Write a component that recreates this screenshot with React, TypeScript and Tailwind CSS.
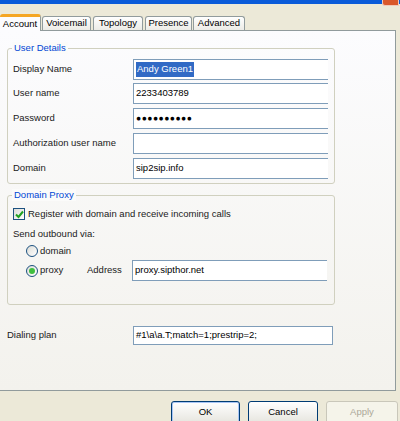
import { FC, ReactNode } from 'react';

const font = "font-['Liberation_Sans',Arial,sans-serif]";

const Field: FC<{ children?: ReactNode; w?: string }> = ({ children, w = 'w-[195px]' }) => (
  <div className={`${w} flex h-[21px] items-center border-y border-l border-[#7f9db9] bg-white pl-[2px] text-[9.5px] text-black`}>
    {children}
  </div>
);

const Row: FC<{ label: string; children?: ReactNode; cls?: string }> = ({ label, children, cls = '' }) => (
  <div className={`flex h-[21px] items-center ${cls}`}>
    <div className="w-[120px] text-[9.5px] text-[#1a1a1a]">{label}</div>
    <Field>{children}</Field>
  </div>
);

const GroupBox: FC<{ title: string; children: ReactNode; cls?: string }> = ({ title, children, cls = '' }) => (
  <div className={`relative ml-[7px] w-[328px] rounded-[3px] border border-[#d0d0bf] ${cls}`}>
    <div className="absolute -top-[7px] left-[4px] bg-[#fbfbfa] px-[2px] text-[9.5px] leading-[12px] text-[#0046d5]">{title}</div>
    {children}
  </div>
);

const tabs = ['Voicemail', 'Topology', 'Presence', 'Advanced'];

const App: FC = () => {
  return (
    <div className={`${font} flex h-[421px] w-[400px] flex-col overflow-hidden bg-[#ece9d8]`}>
      {/* title bar strip */}
      <div className="flex h-[4px] shrink-0 bg-[#0a5bd9]">
        <div className="flex-1" />
        <div className="relative z-10 h-[6px] w-[17px] rounded-bl-[3px] border border-t-0 border-[#f2c9b9] bg-[#d9582b]" />
        <div className="w-[1px]" />
      </div>

      {/* tabs */}
      <div className="mt-[10px] flex h-[16px] shrink-0 items-end">
        <div className="relative z-10 -mb-[1px] flex h-[17px] w-[41px] items-center justify-center rounded-t-[3px] border-r border-t-[3px] border-r-[#919b9c] border-t-[#f5a623] bg-[#fcfcfe] text-[9.5px] text-black">
          Account
        </div>
        {tabs.map((t, i) => (
          <div
            key={t}
            className={`flex h-[14px] items-center justify-center rounded-t-[3px] border border-b-0 border-[#919b9c] bg-gradient-to-b from-white to-[#ecebe6] px-[3px] text-[9.5px] text-black ${i === 0 ? 'ml-[1px] w-[49px]' : i === 1 ? 'ml-[2px] w-[50px]' : i === 2 ? 'ml-[2px] w-[47px]' : 'ml-[1px] w-[52px]'}`}
          >
            {t}
          </div>
        ))}
      </div>

      {/* tab panel */}
      <div className="flex h-[361px] w-[396px] shrink-0 flex-col border-y border-r border-y-[#919b9c] border-r-[#919b9c] bg-gradient-to-b from-[#fcfcfe] to-[#f3f2ed]">
        <GroupBox title="User Details" cls="mt-[17px] h-[136px]">
          <div className="flex flex-col pl-[5px] pt-[10px]">
            <Row label="Display Name">
              <span className="bg-[#316ac5] px-[1px] text-white">Andy Green1</span>
            </Row>
            <Row label="User name" cls="mt-[3px]">2233403789</Row>
            <Row label="Password" cls="mt-[4px]">
              <span className="text-[8.5px] tracking-[0.5px]">●●●●●●●●●●</span>
            </Row>
            <Row label="Authorization user name" cls="mt-[4px]" />
            <Row label="Domain" cls="mt-[4px]">sip2sip.info</Row>
          </div>
        </GroupBox>

        <GroupBox title="Domain Proxy" cls="mt-[11px] h-[110px]">
          <div className="flex flex-col pl-[5px] pt-[11px] text-[9.5px] text-[#1a1a1a]">
            <div className="flex h-[14px] items-center">
              <div className="flex h-[12px] w-[12px] items-center justify-center border border-[#1c5180] bg-gradient-to-br from-[#dcdcd7] to-white">
                <svg width="9" height="9" viewBox="0 0 9 9">
                  <path d="M1 4.5 L3.5 7 L8 1.5" stroke="#21a121" strokeWidth="2" fill="none" />
                </svg>
              </div>
              <span className="ml-[3px]">Register with domain and receive incoming calls</span>
            </div>
            <div className="mt-[6px] flex h-[14px] items-center">Send outbound via:</div>
            <div className="mt-[3px] flex h-[14px] items-center pl-[13px]">
              <div className="h-[12px] w-[12px] rounded-full border border-[#1c5180] bg-gradient-to-br from-[#dcdcd7] to-white" />
              <span className="ml-[2px]">domain</span>
            </div>
            <div className="mt-[2px] flex h-[21px] items-center pl-[13px]">
              <div className="flex h-[12px] w-[12px] items-center justify-center rounded-full border border-[#1c5180] bg-gradient-to-br from-[#dcdcd7] to-white">
                <div className="h-[6px] w-[6px] rounded-full bg-[#3fbf3f]" />
              </div>
              <span className="ml-[2px] w-[47px]">proxy</span>
              <span className="w-[45px]">Address</span>
              <Field>proxy.sipthor.net</Field>
            </div>
          </div>
        </GroupBox>

        <div className="ml-[7px] mt-[21px] flex h-[19px] items-center">
          <div className="w-[126px] text-[9.5px] text-[#1a1a1a]">Dialing plan</div>
          <div className="flex h-[19px] w-[200px] items-center border border-[#7f9db9] bg-white pl-[2px] text-[9.5px] text-black">
            #1\a\a.T;match=1;prestrip=2;
          </div>
        </div>
      </div>

      {/* buttons */}
      <div className="mt-[10px] flex pl-[171px]">
        <div className="flex h-[23px] w-[69px] items-center justify-center rounded-[3px] border border-[#003c74] bg-gradient-to-b from-white to-[#e6e5de] text-[9.5px] text-black shadow-[inset_0_0_0_1px_#a9c6f5]">
          OK
        </div>
        <div className="ml-[8px] flex h-[23px] w-[70px] items-center justify-center rounded-[3px] border border-[#003c74] bg-gradient-to-b from-white to-[#e6e5de] text-[9.5px] text-black">
          Cancel
        </div>
        <div className="ml-[8px] flex h-[23px] w-[72px] items-center justify-center rounded-[3px] border border-[#c9c7ba] bg-[#f5f4ea] text-[9.5px] text-[#aca899]">
          Apply
        </div>
      </div>
    </div>
  );
};

export default App;
